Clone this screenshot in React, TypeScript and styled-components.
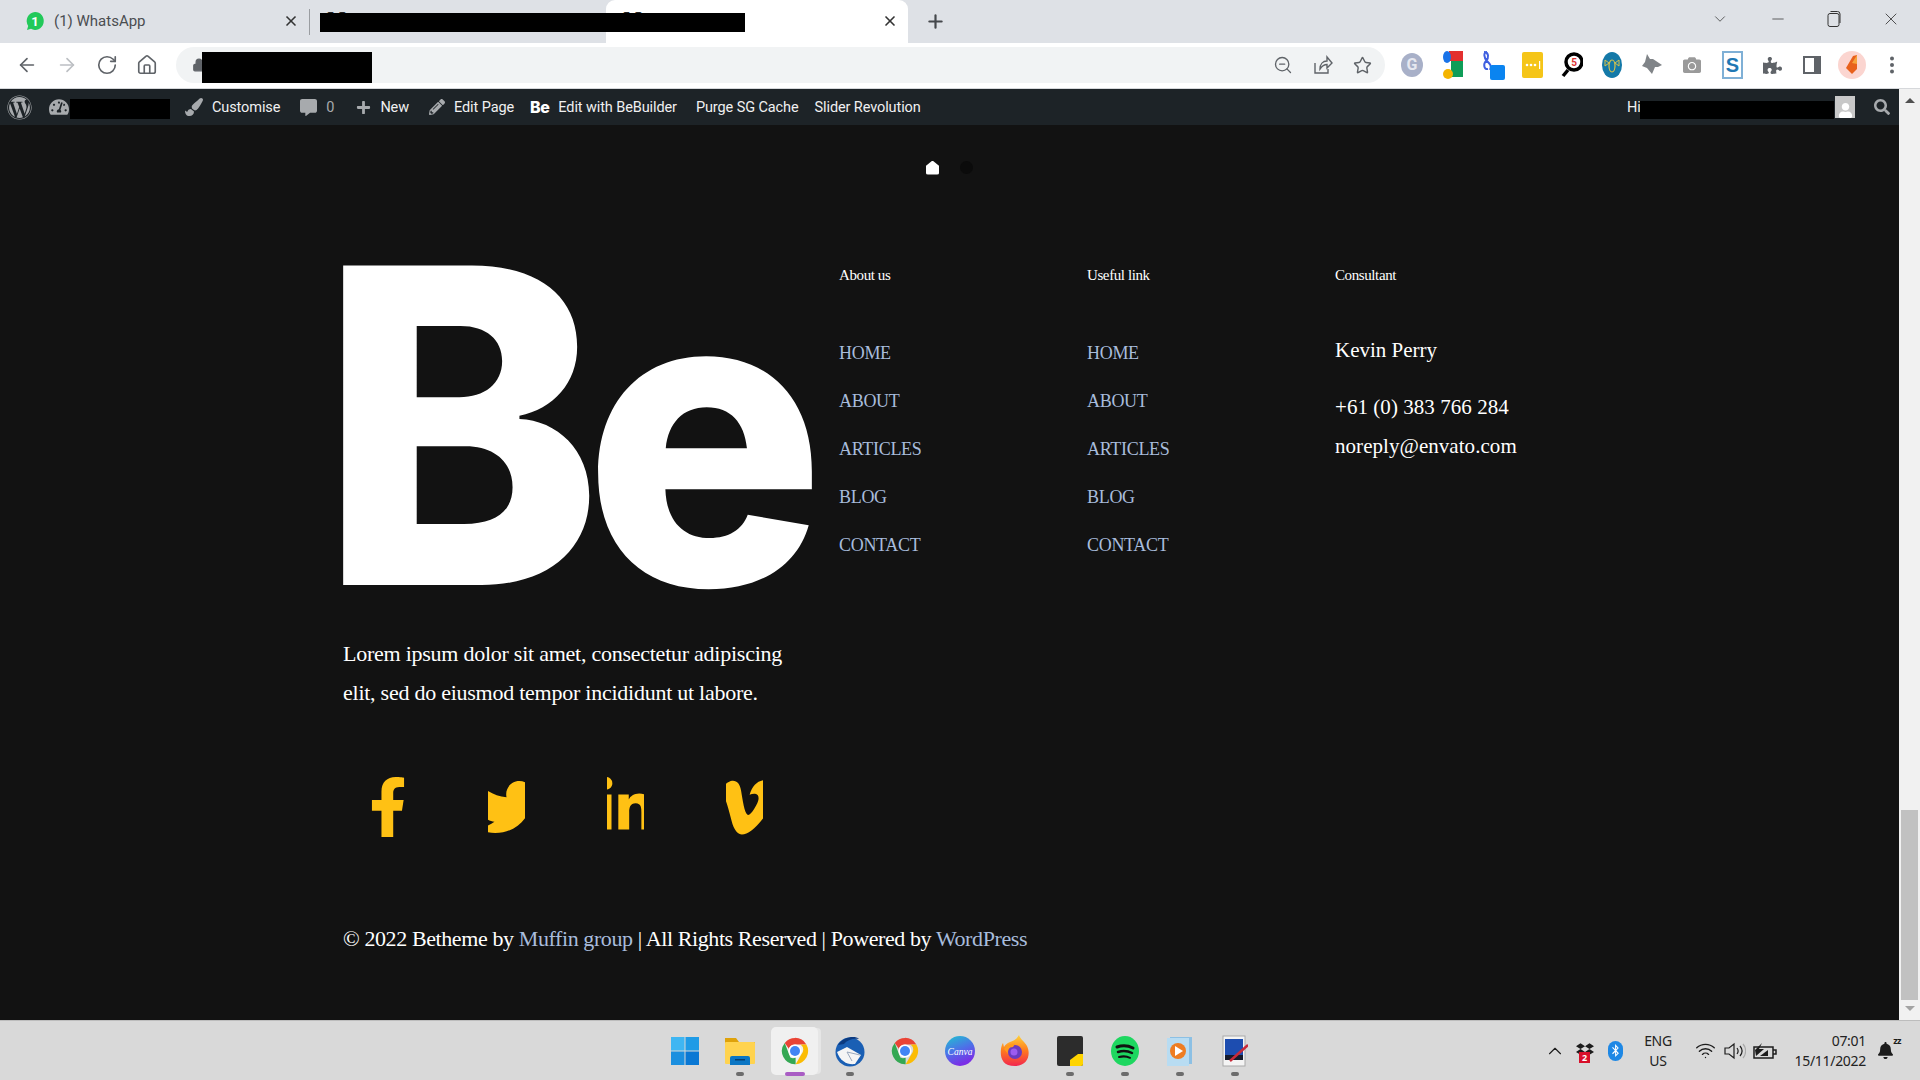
import React from "react";
import styled, { createGlobalStyle } from "styled-components";
import { ArrowLeft, ArrowRight, RotateCw, Home, ZoomOut, Star, ChevronDown, Minus, X, Plus, ChevronUp, Wifi, Lock } from "lucide-react";
import {
  FaWordpress, FaTachometerAlt, FaPaintBrush, FaCommentAlt, FaPlus, FaPencilAlt, FaSearch, FaUser,
  FaFacebookF, FaTwitter, FaLinkedinIn, FaVimeoV, FaPuzzlePiece, FaCamera, FaDropbox, FaBluetoothB, FaBell,
} from "react-icons/fa";

const GlobalStyle = createGlobalStyle`
  html, body { margin: 0; padding: 0; background: #121212; overflow: hidden; }
  * { box-sizing: border-box; }
`;

const Screen = styled.div`
  width: 1920px;
  height: 1080px;
  display: flex;
  flex-direction: column;
  overflow: hidden;
  position: relative;
  font-family: "Roboto", "Liberation Sans", sans-serif;
`;

/* browser chrome */
const TabStrip = styled.div`
  height: 43px;
  background: #dee1e6;
  display: flex;
  position: relative;
  flex-shrink: 0;
`;

const Tab = styled.div<{ $active?: boolean; $w: number }>`
  width: ${(p) => p.$w}px;
  height: 43px;
  display: flex;
  align-items: center;
  padding: 0 10px 2px 26px;
  gap: 10px;
  font-size: 15px;
  color: #4a4d51;
  border-radius: 9px 9px 0 0;
  background: ${(p) => (p.$active ? "#fff" : "transparent")};
`;

const TabTitle = styled.span`
  flex: 1;
  white-space: nowrap;
`;

const SerifPeek = styled.span`
  flex: 1;
  font: 26px/20px "Liberation Serif", serif;
  color: #222;
  margin-left: -9px;
`;

const TabDivider = styled.div`
  width: 1px;
  height: 26px;
  align-self: center;
  background: #9a9da1;
`;

const NewTab = styled.div`
  width: 54px;
  display: flex;
  align-items: center;
  justify-content: center;
  color: #45484c;
`;

const WindowControls = styled.div`
  margin-left: auto;
  display: flex;
  align-items: center;
  color: #333;
  padding-right: 19px;
  gap: 40px;
  height: 37px;
`;

const Redact = styled.div<{ $x: number; $y: number; $w: number; $h: number }>`
  position: absolute;
  left: ${(p) => p.$x}px;
  top: ${(p) => p.$y}px;
  width: ${(p) => p.$w}px;
  height: ${(p) => p.$h}px;
  background: #000;
  z-index: 3;
`;

const Toolbar = styled.div`
  height: 46px;
  flex-shrink: 0;
  background: #fff;
  border-bottom: 1px solid #d6d8db;
  display: flex;
  align-items: center;
  padding-left: 16px;
  padding-bottom: 1px;
`;

const NavButtons = styled.div`
  display: flex;
  align-items: center;
  gap: 18px;
  width: 160px;
  color: #5f6368;
`;

const Omnibox = styled.div`
  width: 1209px;
  height: 36px;
  border-radius: 18px;
  background: #f1f3f4;
  display: flex;
  align-items: center;
  padding-left: 16px;
  color: #5f6368;
`;

const OmniActions = styled.div`
  margin-left: auto;
  margin-right: 13px;
  display: flex;
  align-items: center;
  gap: 20px;
`;

const Extensions = styled.div`
  display: flex;
  align-items: center;
  margin-left: 16px;
  gap: 18px;
`;

const ExtSlot = styled.div`
  width: 22px;
  height: 26px;
  display: flex;
  align-items: center;
  justify-content: center;
  position: relative;
  color: #5f6368;
  svg { flex-shrink: 0; }
`;

const Main = styled.div`
  flex: 1;
  display: flex;
  min-height: 0;
`;

const Viewport = styled.div`
  flex: 1;
  display: flex;
  flex-direction: column;
  min-width: 0;
`;

const AdminBar = styled.div`
  height: 36px;
  flex-shrink: 0;
  background: #1d2327;
  color: #f0f0f1;
  display: flex;
  align-items: center;
  padding: 0 0 0 7px;
  font-size: 14.5px;
  position: relative;
`;

const AdminItem = styled.div<{ $ml?: number }>`
  display: flex;
  align-items: center;
  gap: 9px;
  margin-left: ${(p) => p.$ml ?? 0}px;
  white-space: nowrap;
  letter-spacing: -0.1px;
  svg { color: #a7aaad; }
`;

const MutedCount = styled.span`
  color: #a7aaad;
`;

const BeMark = styled.b`
  font: 800 16px "Inter", sans-serif;
  color: #fff;
  letter-spacing: -0.5px;
`;

const AdminRight = styled.div`
  margin-left: auto;
  width: 272px;
  display: flex;
  align-items: center;
  height: 100%;
  position: relative;
`;

const Avatar = styled.div`
  position: absolute;
  left: 208px;
  top: 7px;
  width: 20px;
  height: 22px;
  background: #c8c8c8;
  display: flex;
  align-items: flex-end;
  justify-content: center;
  color: #fff;
  overflow: hidden;
  svg { color: #fff; }
`;

const AdminSearch = styled.div`
  position: absolute;
  left: 247px;
  top: 10px;
  color: #a7aaad;
`;

/* page */
const Page = styled.main`
  flex: 1;
  background: #121212;
  color: #fff;
  font-family: "Liberation Serif", serif;
  padding: 35px 0 0 343px;
`;

const SliderDots = styled.div`
  display: flex;
  gap: 21px;
  align-items: center;
  margin-left: 583px;
  height: 15px;
`;

const HouseDot = styled.div`
  width: 13px;
  height: 14px;
  background: #fff;
  clip-path: polygon(50% 0, 100% 38%, 100% 100%, 0 100%, 0 38%);
  border-radius: 2px;
`;

const DarkDot = styled.div`
  width: 13px;
  height: 13px;
  border-radius: 50%;
  background: #0b0b0b;
`;

const FooterGrid = styled.div`
  display: grid;
  grid-template-columns: 496px 248px 248px 248px;
  margin-top: 90px;
`;

const LogoColumn = styled.div`
  display: flex;
  flex-direction: column;
`;

const Logo = styled.div`
  display: flex;
  align-items: baseline;
  height: 321px;
  margin-left: -24px;
  font-family: "Inter", sans-serif;
  font-weight: 800;
  line-height: 321px;
  color: #fff;
`;

const LogoB = styled.span`
  display: inline-block;
  width: 265px;
  font-size: 439px;
  transform: scaleX(0.972);
  transform-origin: left center;
`;

const LogoE = styled.span`
  display: inline-block;
  width: 215px;
  font-size: 414px;
  transform: scaleX(0.97);
  transform-origin: left center;
`;

const Blurb = styled.p`
  margin: 48px 0 0;
  font-size: 22px;
  line-height: 39px;
  width: 460px;
  letter-spacing: -0.25px;
`;

const Socials = styled.div`
  display: flex;
  margin-top: 65px;
  margin-left: 26px;
  gap: 82px;
`;

const SocialIcon = styled.div`
  width: 37px;
  height: 60px;
  display: flex;
  align-items: center;
  justify-content: center;
  overflow: hidden;
  color: #ffc114;
  svg { flex-shrink: 0; }
`;

const ColumnTitle = styled.div`
  font-size: 15px;
  line-height: 20px;
  height: 20px;
  letter-spacing: -0.4px;
`;

const LinkList = styled.ul`
  list-style: none;
  margin: 56px 0 0;
  padding: 0;
  display: flex;
  flex-direction: column;
  gap: 24px;
`;

const FooterLink = styled.li`
  font-size: 18px;
  line-height: 24px;
  height: 24px;
  color: #a8bcdc;
  letter-spacing: -0.3px;
`;

const ContactName = styled.div`
  font-size: 21px;
  line-height: 28px;
  margin-top: 51px;
`;

const ContactLine = styled.div<{ $mt: number }>`
  font-size: 21px;
  line-height: 28px;
  margin-top: ${(p) => p.$mt}px;
  letter-spacing: 0.05px;
`;

const Copyright = styled.div`
  margin-top: 87px;
  font-size: 22px;
  line-height: 30px;
  letter-spacing: -0.4px;
  white-space: nowrap;
  a { color: #a8bcdc; text-decoration: none; }
`;

const Scrollbar = styled.div`
  width: 21px;
  background: #f1f1f1;
  display: flex;
  flex-direction: column;
  align-items: center;
  justify-content: space-between;
  flex-shrink: 0;
  padding: 9px 0 9px;
  position: relative;
`;

const ScrollThumb = styled.div`
  position: absolute;
  left: 2px;
  right: 2px;
  top: 721px;
  height: 190px;
  background: #c1c1c1;
`;

const ScrollArrow = styled.div<{ $down?: boolean }>`
  width: 0;
  height: 0;
  border-left: 5px solid transparent;
  border-right: 5px solid transparent;
  border-bottom: ${(p) => (p.$down ? "0" : "5px solid #505050")};
  border-top: ${(p) => (p.$down ? "5px solid #a3a3a3" : "0")};
`;

/* taskbar */
const Taskbar = styled.div`
  height: 60px;
  flex-shrink: 0;
  background: #d9d9d9;
  border-top: 1px solid #bdbdbd;
  display: flex;
  align-items: center;
  position: relative;
  font-family: "Noto Sans", sans-serif;
  color: #222;
`;

const TaskApps = styled.div`
  position: absolute;
  left: 657px;
  top: 0;
  height: 100%;
  display: flex;
`;

const TaskSlot = styled.div<{ $active?: boolean }>`
  width: 55px;
  height: 100%;
  display: flex;
  align-items: center;
  justify-content: center;
  position: relative;
  &::before {
    content: "";
    display: ${(p) => (p.$active ? "block" : "none")};
    position: absolute;
    left: 4px;
    right: 4px;
    top: 6px;
    bottom: 5px;
    background: #f0f0f0;
    border-radius: 5px;
    box-shadow: 4px 0 0 -1px #e6e6e6;
  }
  > svg { position: relative; }
`;

const TaskDot = styled.span<{ $active?: boolean }>`
  position: absolute;
  left: 50%;
  bottom: 4px;
  transform: translateX(-50%);
  width: ${(p) => (p.$active ? 20 : 8)}px;
  height: 4px;
  border-radius: 2px;
  background: ${(p) => (p.$active ? "#a95cc4" : "#6c6c6c")};
`;

const Tray = styled.div`
  margin-left: auto;
  display: flex;
  align-items: center;
  height: 100%;
  padding-right: 16px;
`;

const TrayIcon = styled.div<{ $w: number }>`
  width: ${(p) => p.$w}px;
  display: flex;
  justify-content: center;
  align-items: center;
  color: #1c1c1c;
  position: relative;
  svg { flex-shrink: 0; }
`;

const TrayText = styled.div<{ $w: number; $align: string }>`
  width: ${(p) => p.$w}px;
  text-align: ${(p) => p.$align};
  font-size: 14px;
  line-height: 20px;
  letter-spacing: -0.3px;
  white-space: nowrap;
`;

const BadgeTwo = styled.span`
  position: absolute;
  left: 9px;
  bottom: -3px;
  width: 11px;
  height: 11px;
  background: #d8102a;
  color: #fff;
  font-size: 9px;
  line-height: 11px;
  text-align: center;
  font-weight: 700;
`;

const BluetoothPill = styled.div`
  width: 15px;
  height: 20px;
  border-radius: 8px;
  background: #1e88e5;
  color: #fff;
  display: flex;
  align-items: center;
  justify-content: center;
`;

const SleepZ = styled.span`
  position: absolute;
  right: 3px;
  top: -7px;
  font-size: 9px;
  line-height: 12px;
  font-weight: 700;
  letter-spacing: -0.5px;
`;

const GoogleG = styled.div`
  width: 22px;
  height: 24px;
  border-radius: 50%;
  background: #a8b0c8;
  color: #e6e8f0;
  font: 700 16px/24px "Roboto", sans-serif;
  text-align: center;
`;

const links = ["HOME", "ABOUT", "ARTICLES", "BLOG", "CONTACT"];

const WhatsAppBadge = () => (
  <svg width={18} height={20} viewBox="0 0 18 20">
    <path fill="#22c95a" d="M9 1a8.500 9 0 1 1-4 16.800L1 19l1.200-4A9 9 0 0 1 9 1z" />
    <text x="9" y="14.500" textAnchor="middle" fontSize="13" fontWeight="700" fill="#fff" fontFamily="Roboto, sans-serif">1</text>
  </svg>
);

const ChromeIcon = ({ size = 30 }: { size?: number }) => (
  <svg width={size} height={size} viewBox="0 0 48 48">
    <path fill="#ea4335" d="M24 3a21 21 0 0 1 18.200 10.500H24a10.500 10.500 0 0 0-9.900 7L7.600 11A21 21 0 0 1 24 3z" />
    <path fill="#fbbc04" d="M42.200 13.500A21 21 0 0 1 25 45l9-15.600a10.500 10.500 0 0 0-1-15.900z" />
    <path fill="#34a853" d="M25 45A21 21 0 0 1 7.600 11l8.900 23.500a10.500 10.500 0 0 0 8.500 0z" />
    <circle cx="24" cy="24" r="10.500" fill="#fff" />
    <circle cx="24" cy="24" r="8" fill="#4285f4" />
  </svg>
);

const WindowsIcon = () => (
  <svg width={30} height={30} viewBox="0 0 30 30">
    <rect x="1" y="1" width="13.500" height="13.500" fill="#3fb6f2" />
    <rect x="15.500" y="1" width="13.500" height="13.500" fill="#1f9be6" />
    <rect x="1" y="15.500" width="13.500" height="13.500" fill="#1b8fdf" />
    <rect x="15.500" y="15.500" width="13.500" height="13.500" fill="#0a78d4" />
  </svg>
);

const FolderIcon = () => (
  <svg width={32} height={30} viewBox="0 0 32 30">
    <path fill="#dfa20a" d="M1 2h11l3 4h16v6H1z" />
    <rect x="1" y="6" width="30" height="22" rx="1" fill="#ffd34f" />
    <path fill="#0b76c4" d="M6 29v-7a2 2 0 0 1 2-2h16a2 2 0 0 1 2 2v7z" />
    <rect x="11" y="23" width="10" height="1.500" fill="#063e70" />
  </svg>
);

const ThunderbirdIcon = () => (
  <svg width={30} height={32} viewBox="0 0 30 32">
    <circle cx="15" cy="17" r="14.500" fill="#1a5fb4" />
    <path fill="#0b3a80" d="M3 10C8 2 20 0 24 4c-6-1-12 1-15 5z" />
    <path fill="#f5f5f5" d="M2 17l10-5 14 8-6 9c-8 1-15-3-18-12z" />
    <path fill="none" stroke="#9aa8bd" strokeWidth="1" d="M12 17l13 3M12 17l5 9" />
  </svg>
);

const CanvaIcon = () => (
  <svg width={30} height={30} viewBox="0 0 30 30">
    <defs>
      <linearGradient id="canva" x1="0" y1="0" x2="0.4" y2="1">
        <stop offset="0" stopColor="#1fc4cf" />
        <stop offset="0.55" stopColor="#4d70e8" />
        <stop offset="1" stopColor="#7b2ee6" />
      </linearGradient>
    </defs>
    <circle cx="15" cy="15" r="15" fill="url(#canva)" />
    <text x="15" y="18.500" textAnchor="middle" fill="#fff" fontFamily="Liberation Serif, serif" fontStyle="italic" fontSize="9.500">Canva</text>
  </svg>
);

const FirefoxIcon = () => (
  <svg width={30} height={32} viewBox="0 0 30 32">
    <defs>
      <linearGradient id="fox" x1="0.5" y1="0" x2="0.5" y2="1">
        <stop offset="0" stopColor="#ffd43a" />
        <stop offset="0.5" stopColor="#ff7a1e" />
        <stop offset="1" stopColor="#f2264f" />
      </linearGradient>
    </defs>
    <path fill="url(#fox)" d="M19 0c1 4 6 7 8 11 4 8 1 20-12 20S0 22 1 14c.3-2 1-5 2-6l1 4c1-2 3-4 6-5 3-1 7-3 9-7z" />
    <circle cx="15" cy="17" r="7" fill="#6a3bc0" />
    <circle cx="14" cy="17" r="3.500" fill="#9c5cf0" />
    <path fill="#ff9a1e" d="M4 14c3-5 8-6 11-5l-2 3c-4 0-6 3-5 7z" />
  </svg>
);

const StickyIcon = () => (
  <svg width={26} height={30} viewBox="0 0 26 30">
    <rect width="26" height="30" rx="2" fill="#2c2c2c" />
    <path fill="#ffd400" d="M13 30v-6l8-6h5v10a2 2 0 0 1-2 2z" />
  </svg>
);

const MediaIcon = () => (
  <svg width={26} height={30} viewBox="0 0 26 30">
    <rect x="3" y="1" width="22" height="27" fill="#8cc0e4" />
    <rect x="0" y="2" width="22" height="28" fill="#b8dcf2" />
    <circle cx="11" cy="15" r="8" fill="#ee7d22" />
    <path fill="#fff" d="M8 10l8 5-8 5z" />
  </svg>
);

const SnipIcon = () => (
  <svg width={26} height={32} viewBox="0 0 26 32">
    <rect x="1" y="1" width="22" height="30" fill="#f4f4f4" stroke="#aaa" />
    <rect x="3" y="4" width="18" height="16" fill="#1d4db0" />
    <rect x="3" y="20" width="18" height="5" fill="#161b2c" />
    <path stroke="#c92a3a" strokeWidth="2.500" d="M8 26L26 10" />
  </svg>
);

const SpotifyIcon = () => (
  <svg width={28} height={30} viewBox="0 0 28 30">
    <ellipse cx="14" cy="15" rx="14" ry="15" fill="#1ed760" />
    <g fill="none" stroke="#111" strokeLinecap="round">
      <path strokeWidth="3" d="M6 11c6-2 11-1.500 16 1" />
      <path strokeWidth="2.500" d="M7 16c5-1.500 10-1 14 1" />
      <path strokeWidth="2" d="M8 21c4-1 8-.7 11 .8" />
    </g>
  </svg>
);

const ShareIcon = () => (
  <svg width={20} height={20} viewBox="0 0 20 20" fill="none" stroke="#5f6368" strokeWidth="1.400">
    <path d="M2 8v10h13v-4" />
    <path d="M7 14c0-5 3-8 7-8V2l5 6-5 5V9.500c-3 0-5 1.500-7 4.500z" />
  </svg>
);

const GooglePhotosTile = () => (
  <svg width={21} height={28} viewBox="0 0 21 28">
    <rect x="7" y="0" width="14" height="10" fill="#e3302f" />
    <rect x="9" y="10" width="12" height="16" fill="#0f9d58" />
    <ellipse cx="5" cy="6" rx="4" ry="6" fill="#1a73e8" />
    <circle cx="6" cy="23" r="5" fill="#f4b400" />
  </svg>
);

const LinkTile = () => (
  <svg width={26} height={30} viewBox="0 0 26 30">
    <path fill="none" stroke="#3f5fe0" strokeWidth="2" d="M5 2c5 0 5 6 2 9s-2 9 2 8M8 2c-4 0-3 6 0 9s5 5 3 9" />
    <rect x="11" y="15" width="15" height="15" rx="2" fill="#0a84f0" />
  </svg>
);

const DotsTile = () => (
  <svg width={21} height={26} viewBox="0 0 21 26">
    <rect width="21" height="26" rx="2" fill="#f5c518" />
    <g fill="#fff">
      <circle cx="5" cy="13" r="1.300" />
      <circle cx="9" cy="13" r="1.300" />
      <circle cx="13" cy="13" r="1.300" />
      <rect x="17" y="9" width="1.200" height="8" />
    </g>
  </svg>
);

const MagnifierTile = () => (
  <svg width={22} height={26} viewBox="0 0 22 26">
    <path stroke="#000" strokeWidth="3.500" d="M7 18L2 24" />
    <circle cx="13" cy="10" r="8" fill="#fff" stroke="#000" strokeWidth="3.500" />
    <text x="13" y="14" fontSize="10" fontWeight="700" textAnchor="middle" fill="#d33" fontFamily="Roboto, sans-serif">5</text>
  </svg>
);

const BeeTile = () => (
  <svg width={20} height={26} viewBox="0 0 20 26">
    <ellipse cx="10" cy="13" rx="10" ry="13" fill="#1479a8" />
    <ellipse cx="10" cy="14" rx="3" ry="6" fill="none" stroke="#d7c34a" strokeWidth="1.200" />
    <path fill="none" stroke="#d7c34a" strokeWidth="1" d="M7 11L3 8v6zM13 11l4-3v6z" />
  </svg>
);

const WolfTile = () => (
  <svg width={20} height={22} viewBox="0 0 20 22">
    <path fill="#808488" d="M5 0l3 5h3l3 2 6 4-4 2-3 0-3 7-5-6-5-2 3-4z" />
  </svg>
);

const STile = () => (
  <svg width={21} height={28} viewBox="0 0 21 28">
    <rect width="21" height="28" fill="#7fb0d6" />
    <rect x="2" y="2" width="17" height="24" fill="#fff" />
    <text x="10.500" y="21" textAnchor="middle" fontSize="20" fontWeight="900" fill="#1f78b4" fontFamily="Liberation Sans, sans-serif">S</text>
  </svg>
);

const PanelTile = () => (
  <svg width={18} height={18} viewBox="0 0 18 18">
    <rect width="18" height="18" fill="#5f6368" />
    <rect x="2" y="2" width="9" height="14" fill="#fff" />
  </svg>
);

const FoxAvatar = () => (
  <svg width={28} height={28} viewBox="0 0 28 28">
    <circle cx="14" cy="14" r="14" fill="#fbd5d0" />
    <path fill="#e8611c" d="M8 17l7-12 4-1v14l-5 5z" />
    <path fill="#f6a33c" d="M14 12l5-8v9z" />
  </svg>
);

const RestoreIcon = () => (
  <svg width={14} height={18} viewBox="0 0 14 18" fill="none" stroke="#333" strokeWidth="1">
    <rect x="1" y="3.500" width="11" height="13" rx="2" />
    <path d="M3.500 1.500h7a2.500 2.500 0 0 1 2.500 2.500v9" />
  </svg>
);

const SpeakerIcon = () => (
  <svg width={22} height={18} viewBox="0 0 22 18" fill="none" stroke="#1c1c1c" strokeWidth="1.200">
    <path d="M1 6h4l5-4v14l-5-4H1z" />
    <path d="M13 6c1.500 2 1.500 4 0 6" />
    <path d="M16 4c2.500 3 2.500 7 0 10" />
    <path d="M19 2c3.500 4 3.500 10 0 14" stroke="#aaa" />
  </svg>
);

const BatteryIcon = () => (
  <svg width={26} height={20} viewBox="0 0 26 20">
    <path fill="none" stroke="#1c1c1c" strokeWidth="1.500" d="M2 6h19v11H2zM21 9h3v4h-3" />
    <path fill="#1c1c1c" d="M4 15l8-7h-5l3-6-7 7z" />
    <path fill="#1c1c1c" d="M8 15l8-6v6z" />
  </svg>
);

export default function App() {
  return (
    <Screen>
      <GlobalStyle />
      <TabStrip>
        <Tab $w={309}>
          <WhatsAppBadge />
          <TabTitle>(1) WhatsApp</TabTitle>
          <X size={16} strokeWidth={2.500} color="#333" />
        </Tab>
        <TabDivider />
        <Tab $w={296}><SerifPeek>N</SerifPeek></Tab>
        <Tab $w={302} $active>
          <SerifPeek>N</SerifPeek>
          <X size={16} strokeWidth={2.500} color="#333" />
        </Tab>
        <NewTab><Plus size={21} strokeWidth={2.500} /></NewTab>
        <WindowControls>
          <ChevronDown size={18} strokeWidth={1} />
          <Minus size={18} strokeWidth={1} />
          <RestoreIcon />
          <X size={20} strokeWidth={1} />
        </WindowControls>
        <Redact $x={320} $y={13} $w={425} $h={19} />
      </TabStrip>

      <Toolbar>
        <NavButtons>
          <ArrowLeft size={22} strokeWidth={1.800} />
          <ArrowRight size={22} strokeWidth={1.800} color="#bcbfc3" />
          <RotateCw size={22} strokeWidth={1.800} />
          <Home size={22} strokeWidth={1.800} />
        </NavButtons>
        <Omnibox>
          <Lock size={14} fill="#5f6368" />
          <OmniActions>
            <ZoomOut size={20} strokeWidth={1.600} />
            <ShareIcon />
            <Star size={19} strokeWidth={1.800} />
          </OmniActions>
        </Omnibox>
        <Extensions>
          <ExtSlot><GoogleG>G</GoogleG></ExtSlot>
          <ExtSlot><GooglePhotosTile /></ExtSlot>
          <ExtSlot><LinkTile /></ExtSlot>
          <ExtSlot><DotsTile /></ExtSlot>
          <ExtSlot><MagnifierTile /></ExtSlot>
          <ExtSlot><BeeTile /></ExtSlot>
          <ExtSlot><WolfTile /></ExtSlot>
          <ExtSlot><FaCamera size={18} color="#9a9a9a" /></ExtSlot>
          <ExtSlot><STile /></ExtSlot>
          <ExtSlot><FaPuzzlePiece size={19} color="#5f6368" /></ExtSlot>
          <ExtSlot><PanelTile /></ExtSlot>
          <ExtSlot><FoxAvatar /></ExtSlot>
          <ExtSlot>
            <svg width={4} height={18} viewBox="0 0 4 18" fill="#5f6368">
              <circle cx="2" cy="2.500" r="2" />
              <circle cx="2" cy="9" r="2" />
              <circle cx="2" cy="15.500" r="2" />
            </svg>
          </ExtSlot>
        </Extensions>
        <Redact $x={202} $y={52} $w={170} $h={31} />
      </Toolbar>

      <Main>
        <Viewport>
          <AdminBar>
            <FaWordpress size={25} color="#a7aaad" />
            <AdminItem $ml={17}><FaTachometerAlt size={20} /></AdminItem>
            <AdminItem $ml={116}><FaPaintBrush size={18} />Customise</AdminItem>
            <AdminItem $ml={20}><FaCommentAlt size={17} /><MutedCount>0</MutedCount></AdminItem>
            <AdminItem $ml={22}><FaPlus size={15} />New</AdminItem>
            <AdminItem $ml={20}><FaPencilAlt size={16} />Edit Page</AdminItem>
            <AdminItem $ml={16}><BeMark>Be</BeMark>Edit with BeBuilder</AdminItem>
            <AdminItem $ml={19}>Purge SG Cache</AdminItem>
            <AdminItem $ml={16}>Slider Revolution</AdminItem>
            <AdminRight>
              <AdminItem>Hi</AdminItem>
              <Avatar><FaUser size={15} /></Avatar>
              <AdminSearch><FaSearch size={16} /></AdminSearch>
            </AdminRight>
            <Redact $x={70} $y={10} $w={100} $h={20} />
            <Redact $x={1640} $y={12} $w={194} $h={18} />
          </AdminBar>
          <Page>
            <SliderDots>
              <HouseDot />
              <DarkDot />
            </SliderDots>
            <FooterGrid>
              <LogoColumn>
                <Logo>
                  <LogoB>B</LogoB>
                  <LogoE>e</LogoE>
                </Logo>
                <Blurb>Lorem ipsum dolor sit amet, consectetur adipiscing elit, sed do eiusmod tempor incididunt ut labore.</Blurb>
                <Socials>
                  <SocialIcon><FaFacebookF size={60} /></SocialIcon>
                  <SocialIcon><FaTwitter size={64} /></SocialIcon>
                  <SocialIcon><FaLinkedinIn size={60} /></SocialIcon>
                  <SocialIcon><FaVimeoV size={72} /></SocialIcon>
                </Socials>
              </LogoColumn>
              <div>
                <ColumnTitle>About us</ColumnTitle>
                <LinkList>{links.map((l) => <FooterLink key={l}>{l}</FooterLink>)}</LinkList>
              </div>
              <div>
                <ColumnTitle>Useful link</ColumnTitle>
                <LinkList>{links.map((l) => <FooterLink key={l}>{l}</FooterLink>)}</LinkList>
              </div>
              <div>
                <ColumnTitle>Consultant</ColumnTitle>
                <ContactName>Kevin Perry</ContactName>
                <ContactLine $mt={29}>+61 (0) 383 766 284</ContactLine>
                <ContactLine $mt={11}>noreply@envato.com</ContactLine>
              </div>
            </FooterGrid>
            <Copyright>© 2022 Betheme by <a>Muffin group</a> | All Rights Reserved | Powered by <a>WordPress</a></Copyright>
          </Page>
        </Viewport>
        <Scrollbar>
          <ScrollArrow />
          <ScrollThumb />
          <ScrollArrow $down />
        </Scrollbar>
      </Main>

      <Taskbar>
        <TaskApps>
          <TaskSlot><WindowsIcon /></TaskSlot>
          <TaskSlot><FolderIcon /><TaskDot /></TaskSlot>
          <TaskSlot $active><ChromeIcon /><TaskDot $active /></TaskSlot>
          <TaskSlot><ThunderbirdIcon /><TaskDot /></TaskSlot>
          <TaskSlot><ChromeIcon /></TaskSlot>
          <TaskSlot><CanvaIcon /></TaskSlot>
          <TaskSlot><FirefoxIcon /></TaskSlot>
          <TaskSlot><StickyIcon /><TaskDot /></TaskSlot>
          <TaskSlot><SpotifyIcon /><TaskDot /></TaskSlot>
          <TaskSlot><MediaIcon /><TaskDot /></TaskSlot>
          <TaskSlot><SnipIcon /><TaskDot /></TaskSlot>
        </TaskApps>
        <Tray>
          <TrayIcon $w={30}><ChevronUp size={22} strokeWidth={1.200} /></TrayIcon>
          <TrayIcon $w={30}><FaDropbox size={18} /><BadgeTwo>2</BadgeTwo></TrayIcon>
          <TrayIcon $w={30}><BluetoothPill><FaBluetoothB size={13} /></BluetoothPill></TrayIcon>
          <TrayText $w={56} $align="center">ENG<br />US</TrayText>
          <TrayIcon $w={38}><Wifi size={21} strokeWidth={1.600} /></TrayIcon>
          <TrayIcon $w={22}><SpeakerIcon /></TrayIcon>
          <TrayIcon $w={37}><BatteryIcon /></TrayIcon>
          <TrayText $w={83} $align="right">07:01<br />15/11/2022</TrayText>
          <TrayIcon $w={38}><FaBell size={17} /><SleepZ>zz</SleepZ></TrayIcon>
        </Tray>
      </Taskbar>
    </Screen>
  );
}
